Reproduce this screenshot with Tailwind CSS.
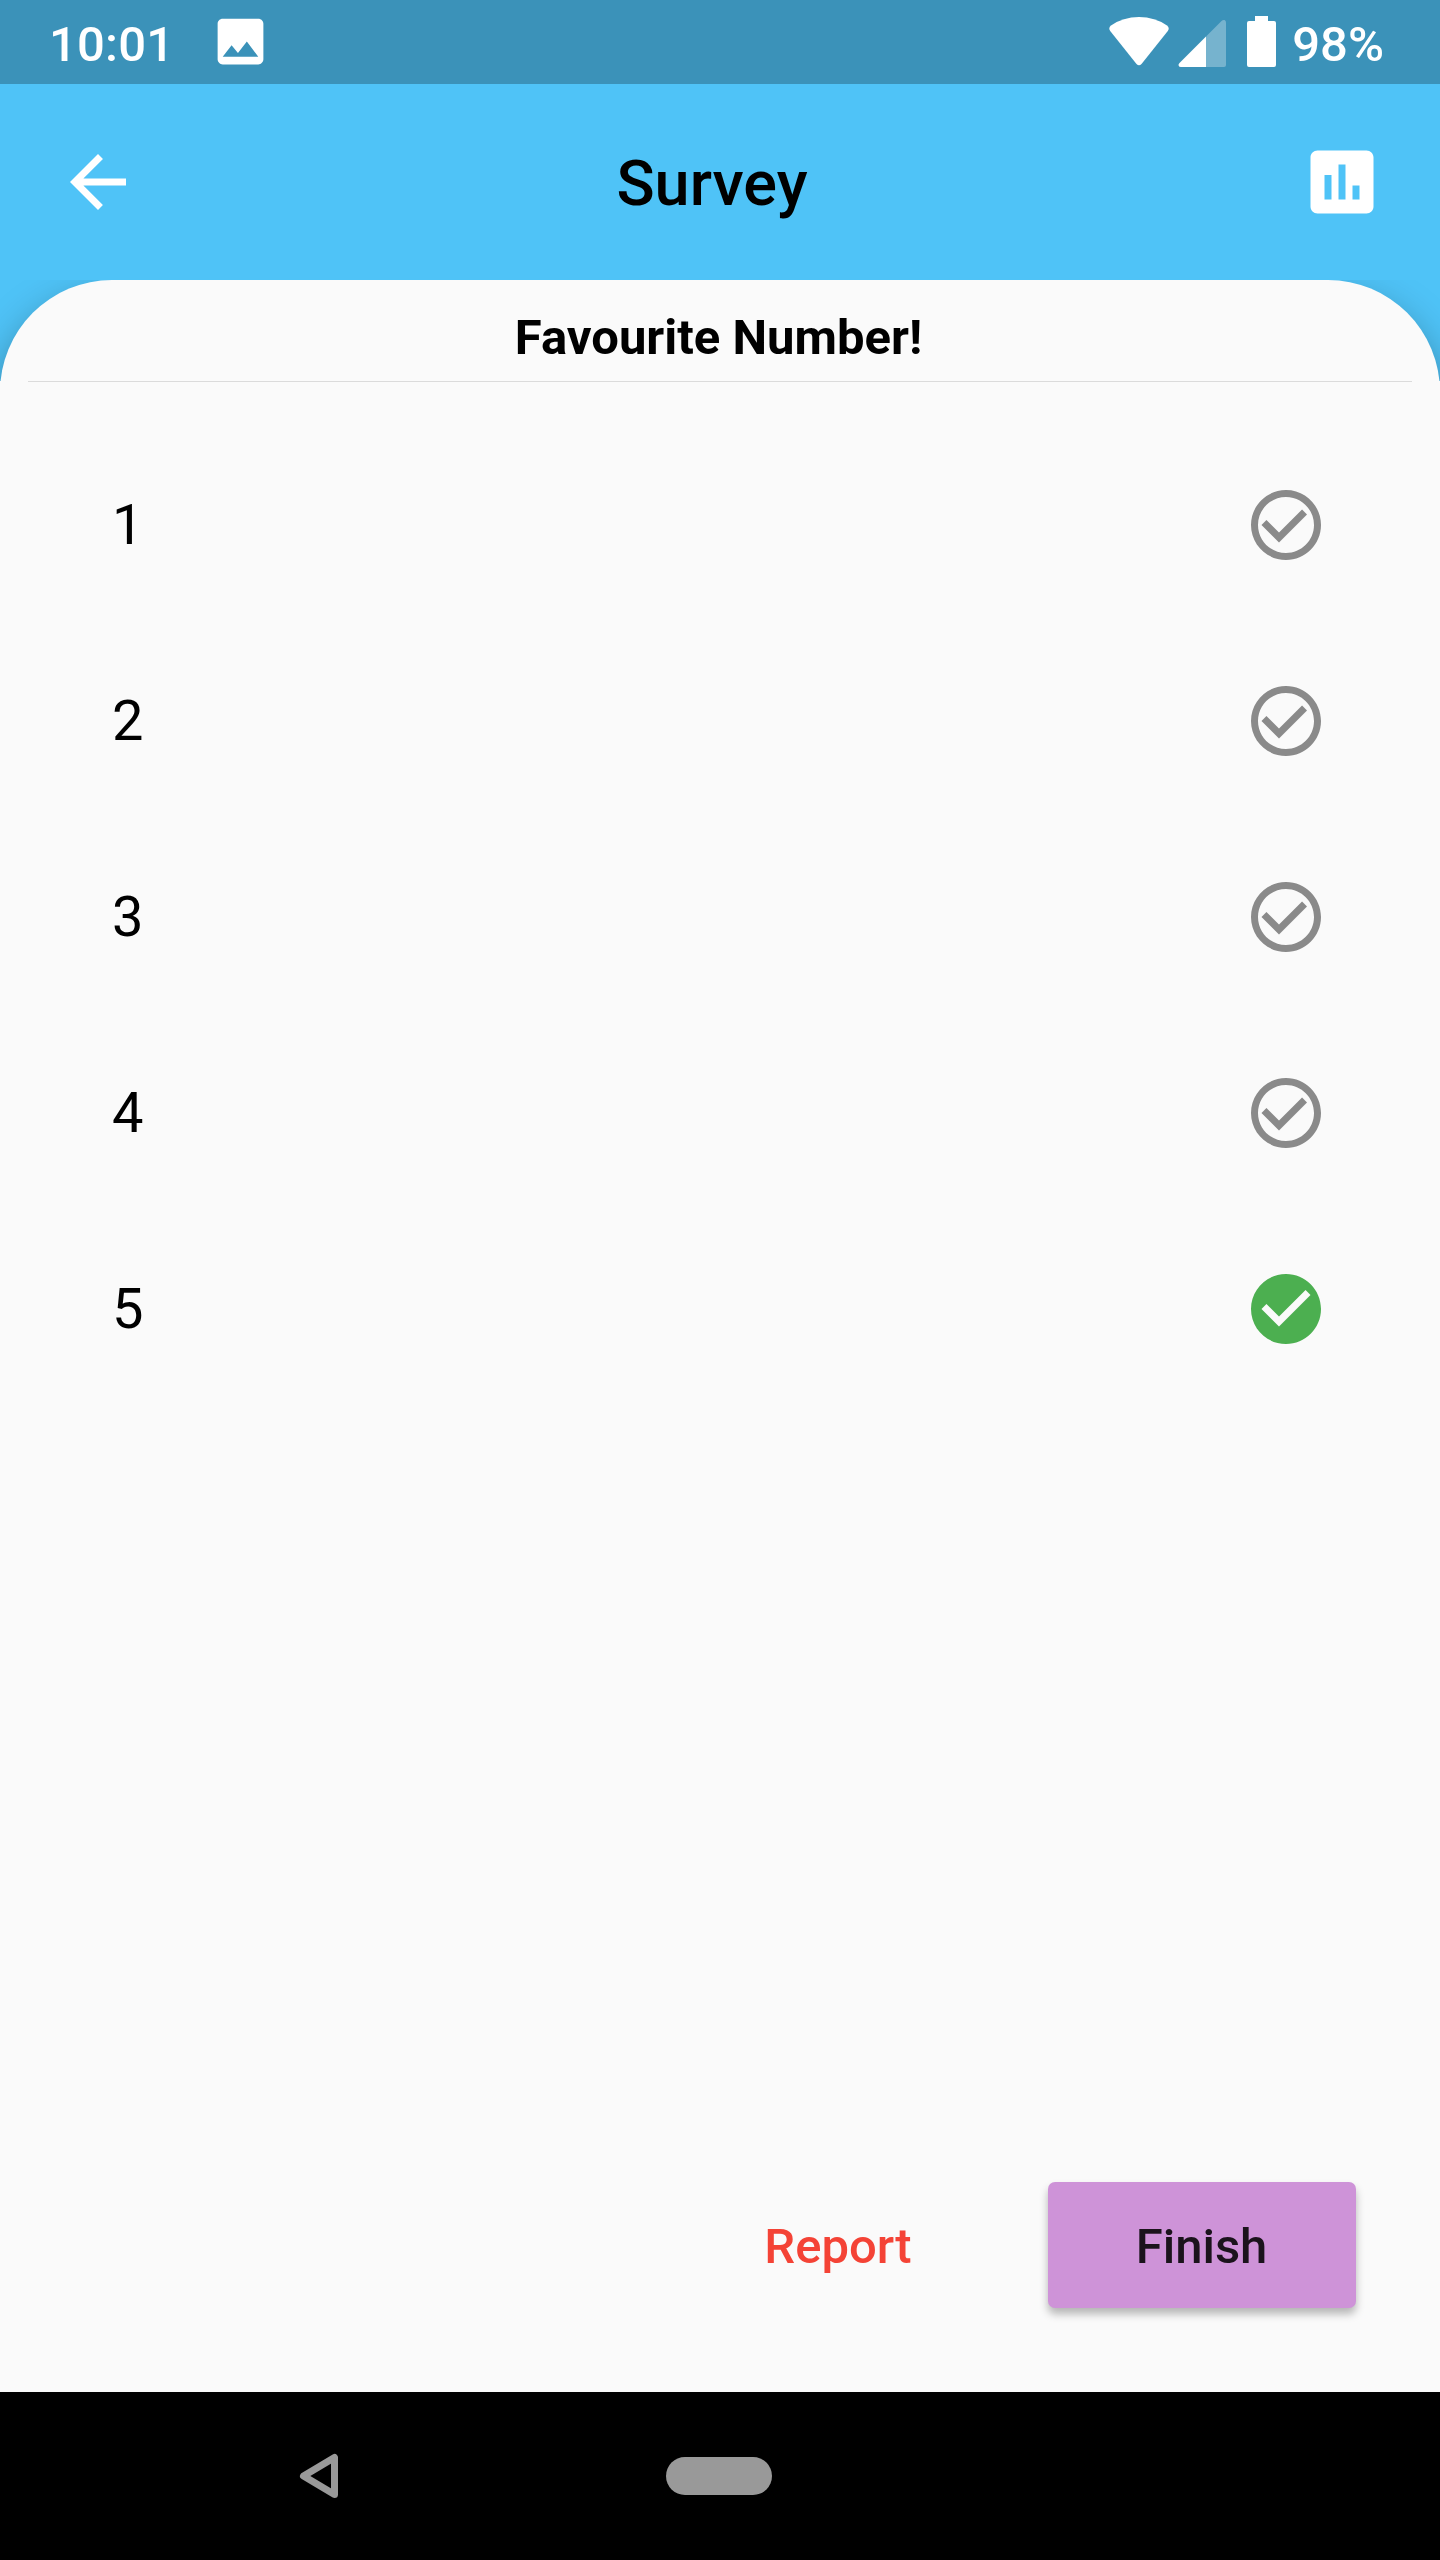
<!DOCTYPE html>
<html lang="en">
<head>
<meta charset="utf-8">
<title>Survey</title>
<script src="https://cdn.jsdelivr.net/npm/@tailwindcss/browser@4"></script>
</head>
<body>
<div class="flex h-[2560px] w-[1440px] flex-col overflow-hidden bg-[#4fc3f7] font-['Roboto',sans-serif] text-black">
  <!-- Status bar -->
  <div class="flex h-[84px] shrink-0 items-start justify-between bg-[#3b92b9] pr-[56px] pl-[49px] text-white">
    <div class="flex items-start">
      <span class="w-[161px] pt-[16px] text-[49px] leading-[57px] font-medium tracking-[0.2px]">10:01</span>
      <svg class="mt-[11px] size-[61px]" viewBox="0 0 24 24" fill="currentColor"><path d="M21 19V5c0-1.1-.9-2-2-2H5c-1.1 0-2 .9-2 2v14c0 1.1.9 2 2 2h14c1.1 0 2-.9 2-2zM8.5 13.5l2.5 3.01L14.5 12l4.5 6H5l3.5-4.5z"/></svg>
    </div>
    <div class="flex items-start">
      <svg class="h-[84px] w-[184px]" viewBox="1108 0 184 84" fill="currentColor">
        <path d="M1110.200 31Q1108 28 1111 25.500Q1123 17 1139 17Q1155 17 1167 25.500Q1170 28 1167.800 31L1141.500 64Q1139 66.500 1136.500 64Z"/>
        <path d="M1206 36.500L1221.500 21Q1223 19.500 1224.500 20Q1226 20.600 1226 22.500V65Q1226 67 1224 67H1206Z" fill-opacity=".3"/>
        <path d="M1206 36.500V67H1181Q1179 67 1178.600 65.500Q1178.200 64.200 1179.500 63Z"/>
        <path d="M1255 16h13v5h6q2 0 2 2v42q0 2-2 2h-25q-2 0-2-2v-42q0-2 2-2h6z"/>
      </svg>
      <span class="pt-[16px] text-[49px] leading-[57px] font-medium">98%</span>
    </div>
  </div>

  <!-- App bar -->
  <header class="relative z-10 flex h-[196px] shrink-0 items-center justify-between bg-[#4fc3f7] pr-[56px] pl-[56px]">
    <svg class="size-[84px] text-white" viewBox="0 0 24 24" fill="currentColor"><path d="M20 11H7.830l5.590-5.590L12 4l-8 8 8 8 1.410-1.410L7.830 13H20v-2z"/></svg>
    <h1 class="mr-[16px] pt-[3px] text-[63px] leading-[74px] font-medium">Survey</h1>
    <svg class="size-[84px] text-white" viewBox="0 0 24 24" fill="currentColor"><path d="M19 3H5c-1.100 0-2 .9-2 2v14c0 1.100.9 2 2 2h14c1.100 0 2-.9 2-2V5c0-1.100-.9-2-2-2zM9 17H7v-7h2v7zm4 0h-2V7h2v10zm4 0h-2v-4h2v4z"/></svg>
  </header>

  <!-- Survey sheet -->
  <main class="flex min-h-0 flex-1 flex-col rounded-t-[112px] bg-[#fafafa] shadow-[0_20px_42px_rgba(0,0,0,0.38)]">
    <h2 class="h-[101px] shrink-0 pt-[29px] pr-[3px] text-center text-[49px] leading-[57px] font-bold">Favourite Number!</h2>
    <div class="flex flex-1 flex-col bg-[#fafafa]">
      <div class="mx-[28px] h-px bg-[#dbdbdb]"></div>
      <ul class="mt-[45px] flex flex-col pr-[112px] pl-[112px] text-[56px] leading-[66px]">
        <li class="flex h-[196px] items-center justify-between"><span>1</span>
          <svg class="size-[84px] text-[#8a8a8a]" viewBox="0 0 24 24" fill="currentColor"><path d="M16.590 7.580L10 14.170l-3.590-3.580L5 12l5 5 8-8zM12 2C6.480 2 2 6.480 2 12s4.480 10 10 10 10-4.480 10-10S17.520 2 12 2zm0 18c-4.420 0-8-3.580-8-8s3.580-8 8-8 8 3.580 8 8-3.580 8-8 8z"/></svg></li>
        <li class="flex h-[196px] items-center justify-between"><span>2</span>
          <svg class="size-[84px] text-[#8a8a8a]" viewBox="0 0 24 24" fill="currentColor"><path d="M16.590 7.580L10 14.170l-3.590-3.580L5 12l5 5 8-8zM12 2C6.480 2 2 6.480 2 12s4.480 10 10 10 10-4.480 10-10S17.520 2 12 2zm0 18c-4.420 0-8-3.580-8-8s3.580-8 8-8 8 3.580 8 8-3.580 8-8 8z"/></svg></li>
        <li class="flex h-[196px] items-center justify-between"><span>3</span>
          <svg class="size-[84px] text-[#8a8a8a]" viewBox="0 0 24 24" fill="currentColor"><path d="M16.590 7.580L10 14.170l-3.590-3.580L5 12l5 5 8-8zM12 2C6.480 2 2 6.480 2 12s4.480 10 10 10 10-4.480 10-10S17.520 2 12 2zm0 18c-4.420 0-8-3.580-8-8s3.580-8 8-8 8 3.580 8 8-3.580 8-8 8z"/></svg></li>
        <li class="flex h-[196px] items-center justify-between"><span>4</span>
          <svg class="size-[84px] text-[#8a8a8a]" viewBox="0 0 24 24" fill="currentColor"><path d="M16.590 7.580L10 14.170l-3.590-3.580L5 12l5 5 8-8zM12 2C6.480 2 2 6.480 2 12s4.480 10 10 10 10-4.480 10-10S17.520 2 12 2zm0 18c-4.420 0-8-3.580-8-8s3.580-8 8-8 8 3.580 8 8-3.580 8-8 8z"/></svg></li>
        <li class="flex h-[196px] items-center justify-between"><span>5</span>
          <svg class="size-[84px] text-[#4caf50]" viewBox="0 0 24 24" fill="currentColor"><path d="M12 2C6.480 2 2 6.480 2 12s4.480 10 10 10 10-4.480 10-10S17.520 2 12 2zm-2 15l-5-5 1.410-1.410L10 14.170l7.590-7.590L19 8l-9 9z"/></svg></li>
      </ul>
      <div class="mt-auto mb-[84px] flex justify-end pr-[84px]">
        <button class="mr-[56px] h-[126px] w-[308px] pt-[2px] text-[49px] leading-[57px] font-medium text-[#f44336]">Report</button>
        <button class="h-[126px] w-[308px] rounded-[7px] bg-[#ce93d8] pt-[2px] pr-[1px] text-[49px] leading-[57px] font-medium text-[#1b131c] shadow-[0_6px_9px_rgba(0,0,0,0.28)]">Finish</button>
      </div>
    </div>
  </main>

  <!-- System navigation -->
  <nav class="flex h-[168px] shrink-0 items-center bg-black pl-[298px] text-[#999999]">
    <svg class="h-[48px] w-[42px]" viewBox="298 2452 42 48" fill="none" stroke="currentColor" stroke-width="7" stroke-linejoin="round"><path d="M334.500 2457.500V2494.500L303.500 2476Z"/></svg>
    <div class="ml-[326px] h-[38px] w-[106px] rounded-full bg-[#999999]"></div>
  </nav>
</div>
</body>
</html>
